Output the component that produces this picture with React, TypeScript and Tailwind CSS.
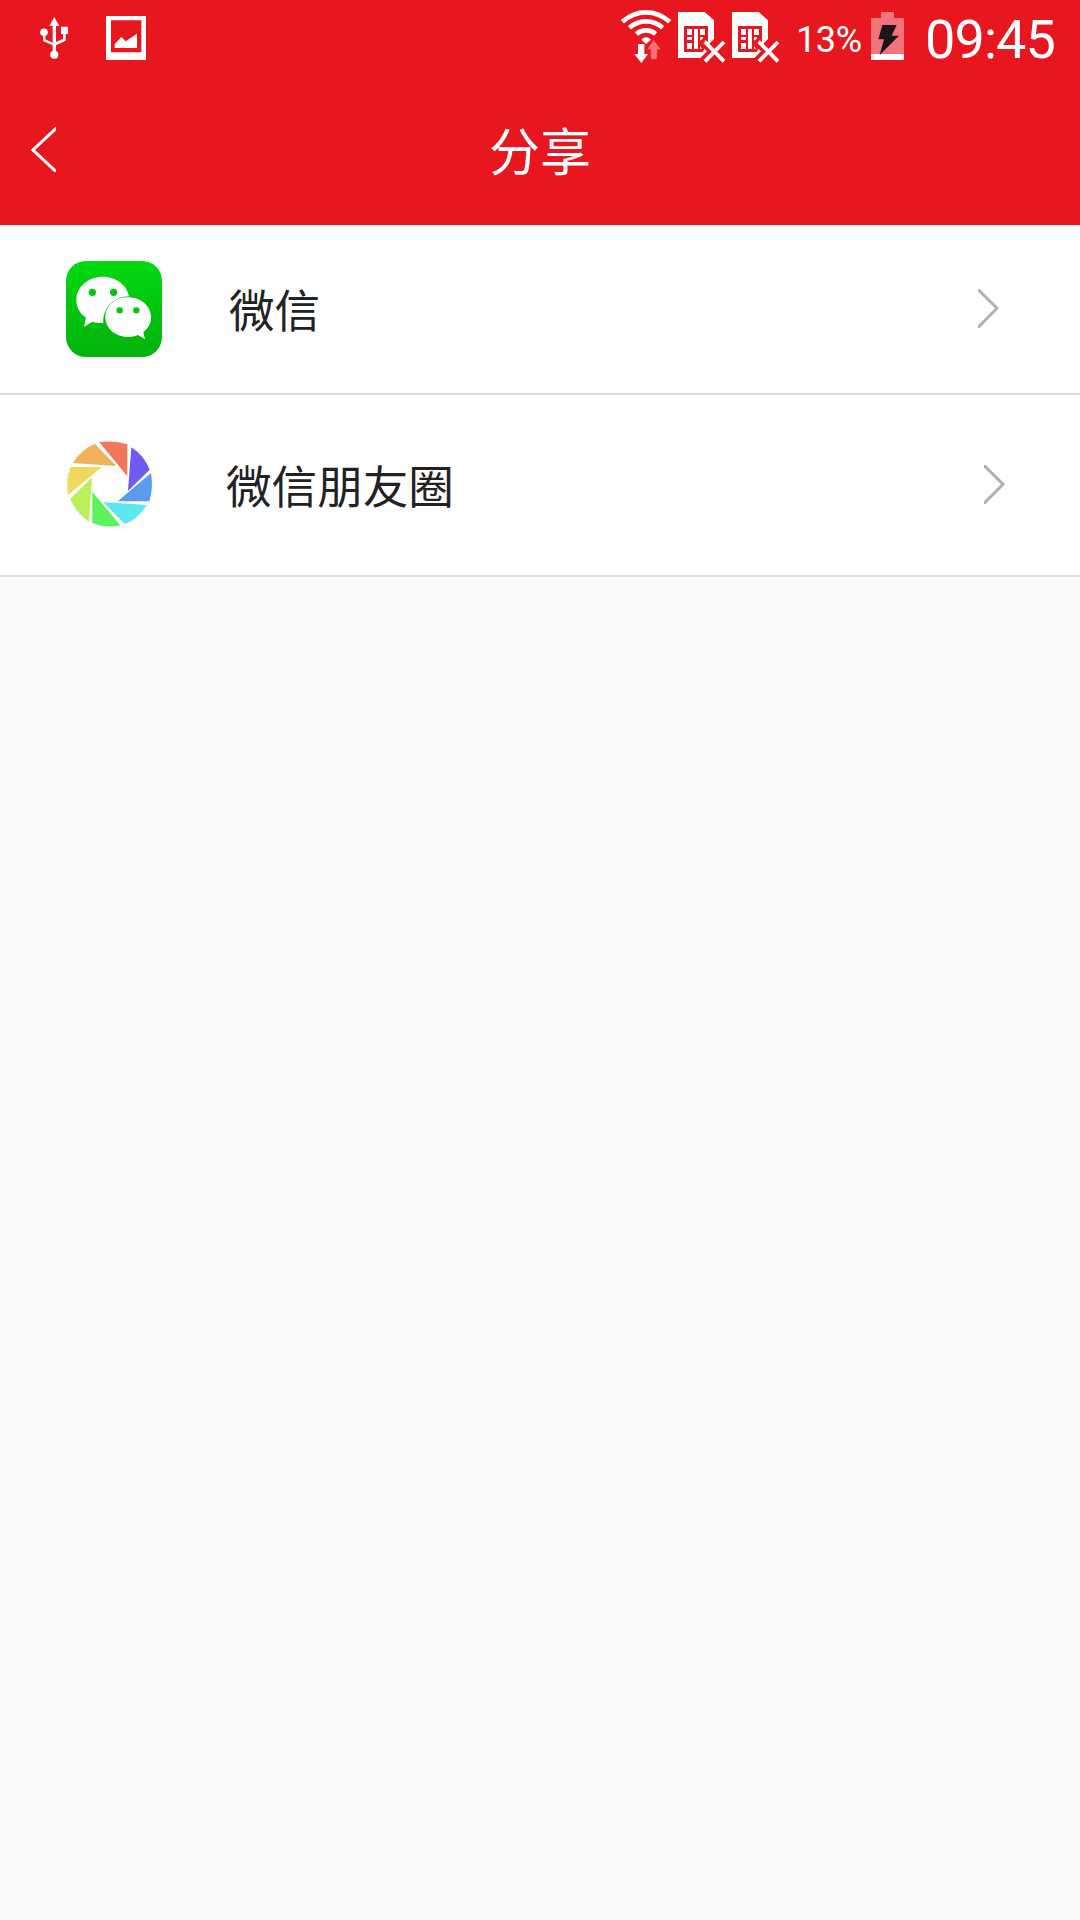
import React from "react";

function UsbIcon() {
  return (
    <svg className="ml-10 mt-4 h-11 w-[30px] shrink-0" viewBox="60 48 90 132" fill="#fff">
      <path d="M103 51L118 78H108V126L129 117V102H123V80H144V102H137V122L108 136V154H98V136L69 123V106H76V118L98 128V78H88Z" />
      <circle cx="72" cy="97" r="11.5" />
      <circle cx="103" cy="164" r="12" />
    </svg>
  );
}

function PictureIcon() {
  return (
    <svg className="ml-9 mt-4 h-11 w-10 shrink-0" viewBox="0 0 120 132">
      <path fill="#fff" fillRule="evenodd" d="M0 0H120V132H0ZM15 13V109H106V13Z" />
      <path fill="#fff" d="M26 96V84L46 63L59 76L93 53V96Z" />
    </svg>
  );
}

function WifiIcon() {
  return (
    <svg className="mt-[9px] h-[55px] w-[50px] shrink-0" viewBox="33 27 150 165">
      <g fill="none" stroke="#fff" strokeWidth="14">
        <path d="M37 65Q69 37 108 37Q147 37 179 65" />
        <path d="M58 83Q80 64 108 64Q136 64 158 83" />
        <path d="M79 102Q92 91 108 91Q124 91 137 102" />
      </g>
      <path fill="#fff" d="M94 119Q108 105 123 119L108 132Z" />
      <path fill="#f47479" stroke="#e8171f" strokeWidth="2" d="M131 119L154 149H142V178H122V149H110Z" />
      <path fill="#fff" d="M84 132H103V162H114L94 189L73 162H84Z" />
    </svg>
  );
}

function SimIcon({ className }: { className: string }) {
  return (
    <svg className={className} viewBox="204 36 144 153">
      <path fill="#fff" d="M204 36H284L312 61V117L294 135L283 124L272 135L291 154L271 174H204Z" />
      <path fill="#e8171f" d="M222 78H294V127L286 121L274 134L285 145L278 156H222Z" />
      <path fill="#fff" d="M231 87H246V105H231ZM231 111H246V120H231ZM231 129H246V147H231ZM252 87H264V147H252ZM270 87H285V105H270ZM270 112H279V115L273 121H270ZM270 139L277 146H270Z" />
      <path fill="none" stroke="#fff" strokeWidth="11.5" d="M285 126L342 184M342 126L285 184" />
    </svg>
  );
}

function BatteryIcon() {
  return (
    <svg className="ml-[10px] mt-3 h-12 w-[33px] shrink-0" viewBox="273 36 99 144">
      <path fill="#f2747a" d="M303 36H342V54H372V162H273V54H303Z" />
      <path fill="#fff" d="M273 162H372V180H273Z" />
      <path fill="#1b1517" d="M307 75H350L335 107H357L299 165L312 118H295Z" />
    </svg>
  );
}

function StatusBar() {
  return (
    <div className="flex h-[75px] items-start font-[Roboto,sans-serif] text-white">
      <UsbIcon />
      <PictureIcon />
      <div className="ml-auto flex items-start">
        <WifiIcon />
        <SimIcon className="ml-[7px] mt-3 h-[51px] w-12 shrink-0" />
        <SimIcon className="ml-[6px] mt-3 h-[51px] w-12 shrink-0" />
        <span className="ml-4 mt-[19px] w-[65px] whitespace-nowrap text-[36px] leading-[42px] tracking-[-0.4px]">13%</span>
        <BatteryIcon />
        <span className="ml-[21px] mt-2 w-[155px] whitespace-nowrap text-[54px] leading-[64px] tracking-[-0.9px]">09:45</span>
      </div>
    </div>
  );
}

function WeChatIcon() {
  return (
    <svg className="h-24 w-24" viewBox="48 48 288 288">
      <defs>
        <linearGradient id="wechat" x1="0" y1="0" x2="0" y2="1">
          <stop offset="0" stopColor="#02d910" />
          <stop offset="1" stopColor="#04b20c" />
        </linearGradient>
      </defs>
      <rect x="48" y="48" width="288" height="288" rx="60" fill="url(#wechat)" />
      <path fill="#fff" d="M158 95C114 95 79 126 79 165C79 187 90 206 108 218L102 245L127 230C137 233 149 234 160 234C158 190 190 155 237 154C231 120 198 95 158 95Z" />
      <path fill="#fff" d="M234 157C196 157 166 183 166 216C166 249 196 276 234 276C245 276 255 274 264 270L285 283L280 261C295 250 303 235 303 216C303 183 272 157 234 157Z" />
      <g fill="#05c50d">
        <circle cx="127" cy="142" r="11" />
        <circle cx="191" cy="142" r="11" />
        <circle cx="209" cy="196" r="9.5" />
        <circle cx="259" cy="196" r="9.5" />
      </g>
    </svg>
  );
}

function MomentsIcon() {
  return (
    <svg className="h-[88px] w-[88px]" viewBox="47 45 264 264">
      <circle cx="179" cy="177" r="130" fill="none" stroke="#e4e4e8" strokeWidth="2" strokeDasharray="10 6" />
      <path fill="#f27659" d="M147 52Q190 45 231 58V154Z" />
      <path fill="#6e5bf0" d="M243 67Q281 91 298 134L233 198Z" />
      <path fill="#5b9cf0" d="M302 144Q310 187 297 229H202Z" />
      <path fill="#5be6f0" d="M158 231L289 240Q264 282 223 297Z" />
      <path fill="#5df25b" d="M126 200L210 301Q169 311 126 293Z" />
      <path fill="#b9f05b" d="M125 157L116 289Q78 266 60 221Z" />
      <path fill="#f0da5b" d="M61 126H155L54 209Q45 166 61 126Z" />
      <path fill="#f0b15b" d="M68 114Q92 73 134 57L198 123Z" />
    </svg>
  );
}

function Chevron() {
  return (
    <svg className="h-[39px] w-[21px]" viewBox="0 0 21 39" fill="none" stroke="#b0b0b0" strokeWidth="3">
      <path d="M-1 -.5L19 19.2L-1 39.5" />
    </svg>
  );
}

export default function App() {
  return (
    <div className="min-h-[1920px] w-[1080px] overflow-hidden bg-[#f9f9f9] font-['Noto_Sans_CJK_SC',sans-serif]">
      <header className="h-[225px] bg-[#e8171f] text-white">
        <StatusBar />
        <div className="grid h-[150px] grid-cols-[120px_1fr_120px]">
          <svg className="ml-[31px] mt-[52px] h-[45px] w-[25px]" viewBox="0 0 25 45" fill="none" stroke="#fff" strokeWidth="3">
            <path d="M26 .5L2 23L26 45.5" />
          </svg>
          <h1 className="mt-[37px] text-center text-[51px] leading-[74px]">分享</h1>
        </div>
      </header>
      <main className="text-[#222]">
        <div className="flex h-[170px] items-center border-b-2 border-[#dcdcdc] bg-white pl-[66px] pr-[81px]">
          <WeChatIcon />
          <span className="ml-[67px] pb-0.5 text-[45.6px] leading-[66px]">微信</span>
          <div className="ml-auto pb-0.5"><Chevron /></div>
        </div>
        <div className="flex h-[182px] items-center border-b-2 border-[#dcdcdc] bg-white pb-0.5 pl-[66px] pr-[75px]">
          <MomentsIcon />
          <span className="ml-[72px] text-[45.6px] leading-[66px]">微信朋友圈</span>
          <div className="ml-auto"><Chevron /></div>
        </div>
      </main>
    </div>
  );
}
